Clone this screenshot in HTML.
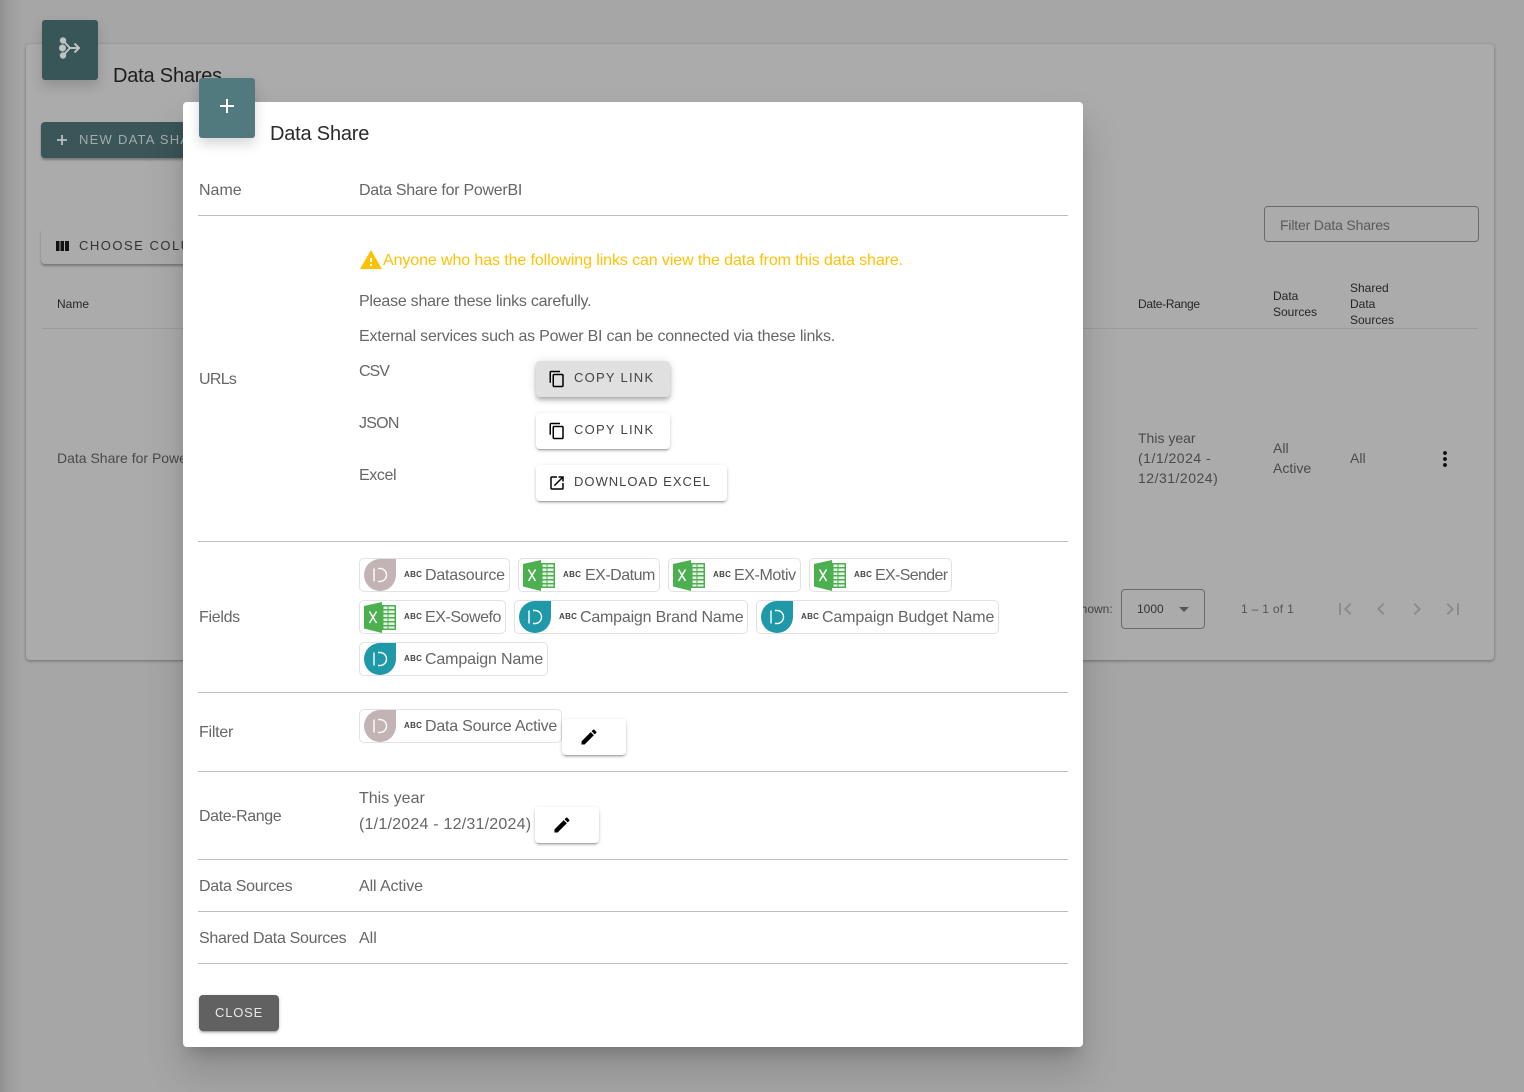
<!DOCTYPE html>
<html lang="en"><head><meta charset="utf-8"><title>Data Share</title>
<style>
html,body{margin:0;padding:0}
body{width:1524px;height:1092px;position:relative;overflow:hidden;background:#a6a6a6;font-family:"Liberation Sans",sans-serif;}
.t{position:absolute;white-space:nowrap;line-height:20px;height:20px}
.l{font-size:16px;color:#666;letter-spacing:-.24px}
.bg12{font-size:12px;color:#262626}
.bg14{font-size:14px;color:#4a4a4a}
.rule{position:absolute;left:198px;width:870px;height:1px;background:#bdbdbd}
.btn{position:absolute;background:#fff;border-radius:4px;box-shadow:0 3px 1px -2px rgba(0,0,0,.2),0 2px 2px 0 rgba(0,0,0,.14),0 1px 5px 0 rgba(0,0,0,.12);height:36px}
.btxt{position:absolute;top:7px;line-height:20px;font-size:13px;letter-spacing:1.25px;color:#444;white-space:nowrap}
.chip{position:absolute;height:32px;border:1px solid #e2e2e2;border-radius:5px;background:#fff}
.chip svg.i{position:absolute;left:4px;top:0}
.abc{position:absolute;left:44px;top:11px;line-height:10px;font-size:8px;font-weight:bold;color:#444;letter-spacing:.3px}
.ct{position:absolute;left:65px;top:7px;line-height:20px;font-size:16px;color:#666;white-space:nowrap}
svg{display:block}
</style></head><body>
<svg width="0" height="0" style="position:absolute"><defs>
<symbol id="xl" viewBox="0 0 32 32"><path d="M0 5 18 1V32L0 27.500Z" fill="#4caf50"/><path d="M18 4H32V29H18Z" fill="#4caf50"/><path d="M19.500 5.500h4v2.500h-4zM24.500 5.500h6v2.500h-6zM19.500 9.500h4v2.500h-4zM24.500 9.500h6v2.500h-6zM19.500 13.500h4v2.500h-4zM24.500 13.500h6v2.500h-6zM19.500 17.500h4v2.500h-4zM24.500 17.500h6v2.500h-6zM19.500 21.500h4v2.500h-4zM24.500 21.500h6v2.500h-6zM19.500 25.500h4v2h-4zM24.500 25.500h6v2h-6z" fill="#eaf5ea"/><path d="M5.500 10.500 12.500 22M12.500 10.500 5.500 22" stroke="#fff" stroke-width="1.500" fill="none"/></symbol>
<symbol id="tealI" viewBox="0 0 32 32"><path d="M16 0H32V16A16 16 0 1 1 16 0Z" fill="#1f98a8"/><path d="M10 9.500V22.500" stroke="#fff" stroke-width="1.400"/><path d="M14 9.500H16A6.500 6.500 0 0 1 16 22.500H14" stroke="#fff" stroke-width="1.400" fill="none"/></symbol>
<symbol id="greyI" viewBox="0 0 32 32"><path d="M16 0H32V16A16 16 0 1 1 16 0Z" fill="#c4b3b5"/><path d="M10 9.500V22.500" stroke="#fff" stroke-width="1.400"/><path d="M14 9.500H16A6.500 6.500 0 0 1 16 22.500H14" stroke="#fff" stroke-width="1.400" fill="none"/></symbol>
<symbol id="copy" viewBox="0 0 24 24"><path d="M16 1H4c-1.100 0-2 .9-2 2v14h2V3h12V1zm3 4H8c-1.100 0-2 .9-2 2v14c0 1.100.9 2 2 2h11c1.100 0 2-.9 2-2V7c0-1.100-.9-2-2-2zm0 16H8V7h11v14z"/></symbol>
<symbol id="edit" viewBox="0 0 24 24"><path d="M3 17.250V21h3.750L17.810 9.940l-3.750-3.750L3 17.250zM20.710 7.040c.39-.39.39-1.020 0-1.410l-2.340-2.340c-.39-.39-1.020-.39-1.410 0l-1.830 1.830 3.750 3.750 1.830-1.830z"/></symbol>
</defs></svg>

<!-- left shadow -->
<div style="position:absolute;left:0;top:0;width:26px;height:1092px;background:linear-gradient(90deg,#8f8f8f 0,#9c9c9c 8px,#a6a6a6 22px)"></div>

<!-- background card -->
<div style="position:absolute;left:26px;top:44px;width:1468px;height:616px;background:#ababab;border-radius:4px;box-shadow:0 1px 3px rgba(0,0,0,.35)"></div>

<div style="position:absolute;left:42px;top:20px;width:56px;height:60px;background:#385558;border-radius:3px;box-shadow:0 6px 12px rgba(0,0,0,.16)">
<svg width="56" height="60" viewBox="42 20 56 60"><g fill="#bcc3c3"><circle cx="63" cy="40.500" r="3.200"/><circle cx="62.500" cy="48" r="3.500"/><circle cx="63" cy="55.500" r="3.200"/></g><path d="M63 40.500 70 48H79M63 55.500 70 48M74.500 43.500 79 48 74.500 52.500" fill="none" stroke="#bcc3c3" stroke-width="2"/></svg></div>
<div class="t" style="left:113px;top:66px;font-size:20px;color:#1d1d1d;letter-spacing:-.2px">Data Shares</div>

<div style="position:absolute;left:41px;top:122px;width:170px;height:36px;background:#3a5658;border-radius:4px;box-shadow:0 2px 2px rgba(0,0,0,.3)">
<svg style="position:absolute;left:15px;top:12px" width="12" height="12" viewBox="0 0 12 12"><path d="M6 1V11M1 6H11" stroke="#b5bfc0" stroke-width="1.800"/></svg>
<div class="t" style="left:38px;top:8px;font-size:13px;letter-spacing:1.250px;color:#a3acad">NEW DATA SHARE</div></div>

<div style="position:absolute;left:41px;top:228px;width:170px;height:36px;background:#ababab;border-radius:4px;box-shadow:0 2px 2px rgba(0,0,0,.3)">
<svg style="position:absolute;left:15px;top:13px" width="13" height="10"><path d="M0 0H3.500V10H0ZM4.500 0H8V10H4.500ZM9 0H13V10H9Z" fill="#111"/></svg>
<div class="t" style="left:38px;top:8px;font-size:13px;letter-spacing:1.500px;color:#333">CHOOSE COLUMNS</div></div>

<div style="position:absolute;left:1264px;top:206px;width:213px;height:34px;border:1px solid #6a6a6a;border-radius:4px"></div>
<div class="t" style="left:1280px;top:215px;font-size:14px;color:#5a5a5a;letter-spacing:-.17px">Filter Data Shares</div>

<div class="t bg12" style="left:57px;top:294px">Name</div>
<div class="t bg12" style="left:1138px;top:294px;letter-spacing:-.3px">Date-Range</div>
<div class="t bg12" style="left:1273px;top:288px;line-height:16px;height:32px">Data<br>Sources</div>
<div class="t bg12" style="left:1350px;top:280px;line-height:16px;height:48px">Shared<br>Data<br>Sources</div>
<div style="position:absolute;left:42px;top:328px;width:1436px;height:1px;background:#9c9c9c"></div>

<div class="t bg14" style="left:57px;top:448px">Data Share for PowerBI</div>
<div class="t bg14" style="left:1138px;top:428px;height:60px">This year<br><span style="letter-spacing:.5px">(1/1/2024 -<br>12/31/2024)</span></div>
<div class="t bg14" style="left:1273px;top:438px;height:40px">All<br>Active</div>
<div class="t bg14" style="left:1350px;top:448px">All</div>
<svg style="position:absolute;left:1433px;top:447px" width="24" height="24" viewBox="0 0 24 24"><path fill="#111" d="M12 8c1.100 0 2-.9 2-2s-.9-2-2-2-2 .9-2 2 .9 2 2 2zm0 2c-1.100 0-2 .9-2 2s.9 2 2 2 2-.9 2-2-.9-2-2-2zm0 6c-1.100 0-2 .9-2 2s.9 2 2 2 2-.9 2-2-.9-2-2-2z"/></svg>

<div class="t" style="left:1042px;top:599px;font-size:12px;color:#444">Items shown:</div>
<div style="position:absolute;left:1121px;top:589px;width:82px;height:38px;border:1px solid #6a6a6a;border-radius:4px"></div>
<div class="t" style="left:1137px;top:599px;font-size:12px;color:#333">1000</div>
<div style="position:absolute;left:1179px;top:607px;border:5px solid transparent;border-top-color:#555;border-bottom:0"></div>
<div class="t" style="left:1241px;top:599px;font-size:12px;color:#555;letter-spacing:.3px">1 – 1 of 1</div>
<svg style="position:absolute;left:1333px;top:597px" width="24" height="24" viewBox="0 0 24 24"><path fill="#8c8c8c" d="M18.410 16.590L13.820 12l4.590-4.590L17 6l-6 6 6 6zM6 6h2v12H6z"/></svg>
<svg style="position:absolute;left:1369px;top:597px" width="24" height="24" viewBox="0 0 24 24"><path fill="#8c8c8c" d="M15.410 7.410L14 6l-6 6 6 6 1.410-1.410L10.830 12z"/></svg>
<svg style="position:absolute;left:1405px;top:597px" width="24" height="24" viewBox="0 0 24 24"><path fill="#8c8c8c" d="M10 6L8.590 7.410 13.170 12l-4.580 4.590L10 18l6-6z"/></svg>
<svg style="position:absolute;left:1441px;top:597px" width="24" height="24" viewBox="0 0 24 24"><path fill="#8c8c8c" d="M5.590 7.410L10.180 12l-4.590 4.590L7 18l6-6-6-6zM16 6h2v12h-2z"/></svg>

<!-- modal -->
<div style="position:absolute;left:183px;top:102px;width:900px;height:945px;background:#fff;border-radius:4px;box-shadow:0 11px 15px -7px rgba(0,0,0,.2),0 24px 38px 3px rgba(0,0,0,.14)"></div>
<div style="position:absolute;left:199px;top:78px;width:56px;height:60px;background:#517a7e;border-radius:3px;box-shadow:0 6px 12px rgba(0,0,0,.16)">
<svg style="position:absolute;left:21px;top:21px" width="14" height="14" viewBox="0 0 14 14"><path d="M7 0V14M0 7H14" stroke="#fff" stroke-width="2"/></svg></div>
<div class="t" style="left:270px;top:124px;font-size:20px;color:#2b2b2b;letter-spacing:-.2px">Data Share</div>

<div class="t l" style="left:199px;top:181px;letter-spacing:0">Name</div>
<div class="t l" style="left:359px;top:181px;letter-spacing:-.27px">Data Share for PowerBI</div>
<div class="rule" style="top:215px"></div>

<svg style="position:absolute;left:359px;top:248px" width="24" height="24" viewBox="0 0 24 24"><path fill="#ffc107" d="M1 21h22L12 2 1 21zm12-3h-2v-2h2v2zm0-4h-2v-4h2v4z"/></svg>
<div class="t" style="left:383px;top:251px;font-size:16px;color:#ffc107;letter-spacing:-.1px">Anyone who has the following links can view the data from this data share.</div>
<div class="t l" style="left:359px;top:292px">Please share these links carefully.</div>
<div class="t l" style="left:359px;top:327px;letter-spacing:-.22px">External services such as Power BI can be connected via these links.</div>
<div class="t l" style="left:199px;top:370px;letter-spacing:-.7px">URLs</div>
<div class="t l" style="left:359px;top:362px;letter-spacing:-1px">CSV</div>
<div class="t l" style="left:359px;top:414px;letter-spacing:-.75px">JSON</div>
<div class="t l" style="left:359px;top:466px;letter-spacing:-.4px">Excel</div>

<div class="btn" style="left:536px;top:361px;width:134px;background:#e0e0e0;box-shadow:0 2px 4px -1px rgba(0,0,0,.2),0 4px 5px 0 rgba(0,0,0,.14),0 1px 10px 0 rgba(0,0,0,.12)">
<svg style="position:absolute;left:12px;top:9px;" width="18" height="18" viewBox="0 0 24 24"><use href="#copy"/></svg><div class="btxt" style="left:38px">COPY LINK</div></div>
<div class="btn" style="left:536px;top:413px;width:134px">
<svg style="position:absolute;left:12px;top:9px;" width="18" height="18" viewBox="0 0 24 24"><use href="#copy"/></svg><div class="btxt" style="left:38px">COPY LINK</div></div>
<div class="btn" style="left:536px;top:465px;width:191px">
<svg style="position:absolute;left:12px;top:9px;" width="18" height="18" viewBox="0 0 24 24"><path d="M19 19H5V5h7V3H5c-1.110 0-2 .9-2 2v14c0 1.100.89 2 2 2h14c1.100 0 2-.9 2-2v-7h-2v7zM14 3v2h3.590l-9.830 9.830 1.410 1.410L19 6.410V10h2V3h-7z"/></svg><div class="btxt" style="left:38px;letter-spacing:1px">DOWNLOAD EXCEL</div></div>
<div class="rule" style="top:541px"></div>

<div class="t l" style="left:199px;top:608px;letter-spacing:-.3px">Fields</div>
<div class="chip" style="left:359px;top:558px;width:149px"><svg class="i" width="32" height="32"><use href="#greyI"/></svg><span class="abc">ABC</span><span class="ct" style="letter-spacing:-.2px">Datasource</span></div>
<div class="chip" style="left:518px;top:558px;width:140px"><svg class="i" width="32" height="32"><use href="#xl"/></svg><span class="abc">ABC</span><span class="ct" style="left:66px;letter-spacing:-.5px">EX-Datum</span></div>
<div class="chip" style="left:668px;top:558px;width:131px"><svg class="i" width="32" height="32"><use href="#xl"/></svg><span class="abc">ABC</span><span class="ct" style="letter-spacing:-.4px">EX-Motiv</span></div>
<div class="chip" style="left:809px;top:558px;width:141px"><svg class="i" width="32" height="32"><use href="#xl"/></svg><span class="abc">ABC</span><span class="ct" style="letter-spacing:-.65px">EX-Sender</span></div>
<div class="chip" style="left:359px;top:600px;width:145px"><svg class="i" width="32" height="32"><use href="#xl"/></svg><span class="abc">ABC</span><span class="ct" style="letter-spacing:-.45px">EX-Sowefo</span></div>
<div class="chip" style="left:514px;top:600px;width:232px"><svg class="i" width="32" height="32"><use href="#tealI"/></svg><span class="abc">ABC</span><span class="ct" style="letter-spacing:-.2px">Campaign Brand Name</span></div>
<div class="chip" style="left:756px;top:600px;width:241px"><svg class="i" width="32" height="32"><use href="#tealI"/></svg><span class="abc">ABC</span><span class="ct" style="letter-spacing:-.15px">Campaign Budget Name</span></div>
<div class="chip" style="left:359px;top:642px;width:187px"><svg class="i" width="32" height="32"><use href="#tealI"/></svg><span class="abc">ABC</span><span class="ct" style="letter-spacing:-.15px">Campaign Name</span></div>
<div class="rule" style="top:692px"></div>

<div class="t l" style="left:199px;top:723px">Filter</div>
<div class="chip" style="left:359px;top:709px;width:201px"><svg class="i" width="32" height="32"><use href="#greyI"/></svg><span class="abc">ABC</span><span class="ct" style="letter-spacing:-.22px">Data Source Active</span></div>
<div class="btn" style="left:562px;top:719px;width:64px"><svg style="position:absolute;left:17px;top:8px" width="20" height="20" viewBox="0 0 24 24"><use href="#edit"/></svg></div>
<div class="rule" style="top:771px"></div>

<div class="t l" style="left:199px;top:807px;letter-spacing:-.4px">Date-Range</div>
<div class="t l" style="left:359px;top:789px;letter-spacing:0">This year</div>
<div class="t l" style="left:359px;top:815px;letter-spacing:.22px">(1/1/2024 - 12/31/2024)</div>
<div class="btn" style="left:535px;top:807px;width:64px"><svg style="position:absolute;left:17px;top:8px" width="20" height="20" viewBox="0 0 24 24"><use href="#edit"/></svg></div>
<div class="rule" style="top:859px"></div>

<div class="t l" style="left:199px;top:877px;letter-spacing:-.3px">Data Sources</div>
<div class="t l" style="left:359px;top:877px;letter-spacing:-.1px">All Active</div>
<div class="rule" style="top:911px"></div>

<div class="t l" style="left:199px;top:929px;letter-spacing:-.3px">Shared Data Sources</div>
<div class="t l" style="left:359px;top:929px;letter-spacing:0">All</div>
<div class="rule" style="top:963px"></div>

<div class="btn" style="left:199px;top:995px;width:80px;background:#616161"><div class="btxt" style="left:16px;top:8px;color:#e8e8e8;letter-spacing:.8px">CLOSE</div></div>
</body></html>
